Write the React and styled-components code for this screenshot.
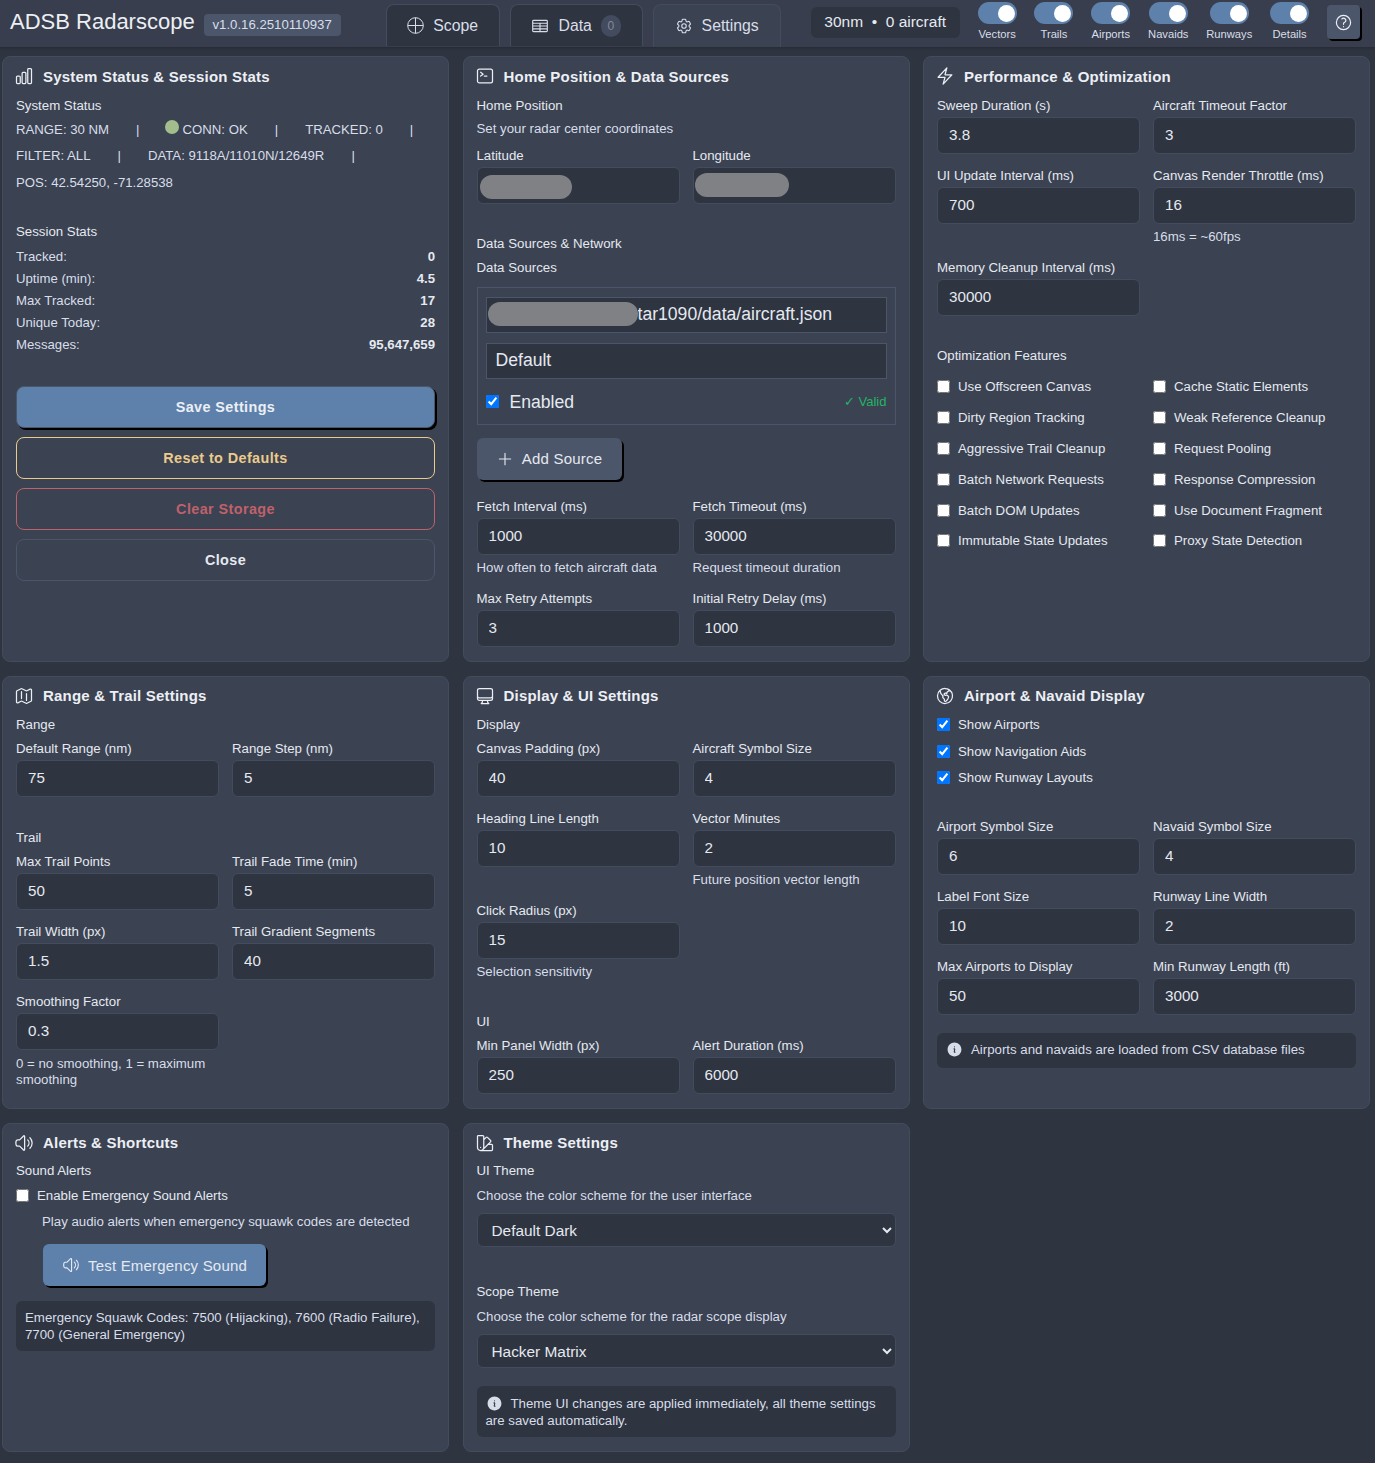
import React from 'react'
import styled, { createGlobalStyle } from 'styled-components'
import {
  HiOutlineChartBar, HiOutlineCommandLine, HiOutlineBolt, HiOutlineMap, HiOutlineComputerDesktop,
  HiOutlineGlobeAmericas, HiOutlineSpeakerWave, HiOutlineSwatch, HiOutlinePlus,
  HiOutlineQuestionMarkCircle, HiOutlineCog6Tooth, HiOutlineTableCells, HiInformationCircle,
} from 'react-icons/hi2'

const GlobalStyle = createGlobalStyle`
  * { box-sizing: border-box; }
  html, body { margin: 0; background: #2e3440; }
  body { font-family: "Liberation Sans", Arial, sans-serif; color: #e5e9f0; }
`

const Page = styled.div`
  width: 1375px;
  height: 1463px;
  overflow: hidden;
`

const Header = styled.header`
  height: 47px;
  display: flex;
  align-items: flex-start;
  padding: 0 14px 0 10px;
  background: #383e4d;
  box-shadow: 0 1px 3px rgba(0, 0, 0, 0.2);
`

const Brand = styled.h1`
  margin: 9px 0 0;
  font-size: 22px;
  line-height: 26px;
  font-weight: 400;
  color: #eceff4;
`

const Version = styled.span`
  margin: 14px 0 0 9px;
  height: 22px;
  width: 137px;
  border-radius: 4px;
  background: #4c566a;
  color: #d8dee9;
  font-size: 13.2px;
  line-height: 22px;
  text-align: center;
`

const Tabs = styled.nav`
  margin: 4px 0 0 45px;
  display: flex;
  gap: 10px;
`

const Tab = styled.div`
  width: ${(p) => p.$w}px;
  height: ${(p) => (p.$active ? 43 : 42)}px;
  display: flex;
  align-items: center;
  justify-content: center;
  gap: 9px;
  font-size: 15.8px;
  color: #d8dee9;
  background: ${(p) => (p.$active ? '#3b4252' : '#2e3440')};
  border: 1px solid #434c5e;
  border-bottom: 0;
  border-radius: 8px 8px 0 0;
`

const TabCount = styled.span`
  width: 20px;
  height: 22px;
  border-radius: 10px;
  background: #434c5e;
  color: #81899a;
  font-size: 12px;
  line-height: 22px;
  text-align: center;
`

const StatPill = styled.div`
  margin: 7px 0 0 30px;
  width: 149px;
  height: 31px;
  border-radius: 6px;
  background: #2e3440;
  font-size: 15.5px;
  line-height: 30px;
  text-align: center;
  white-space: pre;
  color: #e5e9f0;
`

const Toggles = styled.div`
  margin: 2px 0 0 18px;
  display: flex;
  gap: 17.8px;
`

const ToggleItem = styled.div`
  display: flex;
  flex-direction: column;
  align-items: center;
  min-width: 39px;
`

const ToggleTrack = styled.span`
  display: flex;
  align-items: center;
  justify-content: flex-end;
  width: 39px;
  height: 22px;
  padding-right: 2px;
  border-radius: 11px;
  background: #5e81ac;
`

const ToggleKnob = styled.span`
  width: 17px;
  height: 17px;
  border-radius: 50%;
  background: #fff;
`

const ToggleLabel = styled.span`
  margin-top: 3px;
  font-size: 11.2px;
  line-height: 14px;
  color: #d8dee9;
`

const HelpButton = styled.button`
  margin: 5px 0 0 18px;
  width: 33px;
  height: 34px;
  padding: 0;
  display: flex;
  align-items: center;
  justify-content: center;
  border: 0;
  border-radius: 4px;
  background: #4c566a;
  color: #eceff4;
  box-shadow: 2px 2px 0 #000;
`

const Grid = styled.main`
  margin: 9px 5px 0 2px;
  display: grid;
  grid-template-columns: repeat(3, 447px);
  column-gap: 13.5px;
  row-gap: 13.5px;
`

const Panel = styled.section`
  padding: 9px 13px 14px 13px;
  background: #3b4252;
  border: 1px solid #434c5e;
  border-radius: 8px;
`

const PanelTitle = styled.h2`
  margin: 0 0 10.5px;
  display: flex;
  align-items: center;
  height: 20px;
  font-size: 15px;
  font-weight: 700;
  letter-spacing: 0.2px;
  color: #eceff4;

  svg {
    width: 20px;
    height: 20px;
    margin: 0 9px 0 -2px;
    flex: none;
  }
`

const SubHead = styled.div`
  margin-top: ${(p) => p.$mt || 0}px;
  font-size: 13.25px;
  line-height: 17px;
  color: #e5e9f0;
`

const Note = styled.div`
  margin-top: ${(p) => p.$mt || 0}px;
  margin-left: ${(p) => p.$ml || 0}px;
  font-size: 13.25px;
  line-height: 17px;
  color: #d8dee9;
`

const StatusLine = styled.div`
  margin-top: 7px;
  display: flex;
  flex-wrap: wrap;
  column-gap: 27px;
  row-gap: 9.5px;
  font-size: 13.2px;
  line-height: 17px;
  color: #d8dee9;
`

const StatusItem = styled.span`
  display: inline-flex;
  align-items: center;
`

const StatusDot = styled.span`
  width: 14px;
  height: 14px;
  margin: -4px 4px 0 -2px;
  border-radius: 50%;
  background: #a3be8c;
`

const StatRows = styled.div`
  margin-top: 8px;
  display: flex;
  flex-direction: column;
  gap: 5px;
`

const StatRow = styled.div`
  display: flex;
  justify-content: space-between;
  font-size: 13.2px;
  line-height: 17px;
  color: #d8dee9;

  b {
    color: #e5e9f0;
  }
`

const ActionStack = styled.div`
  margin-top: 33.5px;
  display: flex;
  flex-direction: column;
  gap: 9px;
`

const ActionButton = styled.button`
  height: 42px;
  border-radius: 8px;
  font-family: inherit;
  font-size: 14.4px;
  font-weight: 700;
  letter-spacing: 0.4px;
  color: ${(p) => p.$color};
  background: ${(p) => (p.$primary ? '#5e81ac' : 'transparent')};
  border: 1px solid ${(p) => p.$border};
  box-shadow: ${(p) => (p.$primary ? '2px 2px 0 #000' : 'none')};
`

const FieldGrid = styled.div`
  margin-top: ${(p) => p.$mt || 0}px;
  display: grid;
  grid-template-columns: 203px 203px;
  column-gap: 13px;
  row-gap: 13px;
  align-items: start;
`

const Field = styled.div`
  display: flex;
  flex-direction: column;
  min-width: 0;
`

const FieldLabel = styled.label`
  margin-bottom: 3px;
  font-size: 13.25px;
  line-height: 17px;
  color: #e5e9f0;
`

const InputWrap = styled.div`
  position: relative;
`

const Input = styled.input`
  display: block;
  width: 100%;
  height: 37px;
  padding: 0 11px 2px;
  border: 1px solid #434c5e;
  border-radius: 6px;
  background: #2e3440;
  color: #e5e9f0;
  font-family: inherit;
  font-size: 15.2px;
  outline: none;
`

const FieldHint = styled.div`
  margin: ${(p) => (p.$tight ? 6 : 4)}px 0 1px;
  font-size: 13.25px;
  line-height: ${(p) => (p.$tight ? 16.5 : 17)}px;
  color: #d8dee9;
`

const Redacted = styled.span`
  position: absolute;
  left: ${(p) => p.$left}px;
  top: ${(p) => p.$top}px;
  width: ${(p) => p.$w}px;
  height: 24px;
  border-radius: 12px;
  background: #808185;
`

const SourceBox = styled.div`
  margin-top: 10.5px;
  height: 138px;
  padding: 9px 8px;
  border: 1px solid #4c566a;
  display: flex;
  flex-direction: column;
  gap: 10px;
`

const SourceInput = styled.input`
  display: block;
  width: 100%;
  height: 36px;
  padding: 0 0 0 ${(p) => p.$pad || 9}px;
  border: 1px solid #4c566a;
  background: #2e3440;
  color: #e5e9f0;
  font-family: inherit;
  font-size: 17.6px;
  outline: none;
`

const SourceFoot = styled.div`
  display: flex;
  align-items: center;
  justify-content: space-between;
  margin-top: 1px;
`

const SourceEnabled = styled.label`
  display: flex;
  align-items: center;
  gap: 11px;
  font-size: 17.6px;
  line-height: 24px;
  color: #e5e9f0;
`

const Valid = styled.span`
  font-size: 13px;
  color: #22b566;
`

const RaisedButton = styled.button`
  margin-top: ${(p) => p.$mt}px;
  margin-left: ${(p) => p.$ml || 0}px;
  width: ${(p) => p.$w}px;
  height: 42px;
  display: flex;
  align-items: center;
  justify-content: center;
  gap: 8px;
  border: 0;
  border-radius: 6px;
  font-family: inherit;
  font-size: 15px;
  letter-spacing: 0.2px;
  color: #e5e9f0;
  background: ${(p) => p.$bg};
  box-shadow: 2px 2px 0 #000;
`

const Native = styled.input`
  margin: 0;
  width: 13px;
  height: 13px;
  flex: none;
`

const CheckGrid = styled.div`
  margin-top: 14px;
  display: grid;
  grid-template-columns: 203px 203px;
  column-gap: 13px;
  row-gap: 13.9px;
`

const CheckList = styled.div`
  margin-top: ${(p) => p.$mt || 0}px;
  display: flex;
  flex-direction: column;
  gap: ${(p) => p.$gap || 0}px;
`

const CheckItem = styled.label`
  display: flex;
  align-items: center;
  gap: 8px;
  font-size: 13.25px;
  line-height: 17px;
  color: #e5e9f0;
`

const InfoBox = styled.div`
  margin-top: ${(p) => p.$mt || 0}px;
  padding: ${(p) => p.$pad || '8px 9px 10px'};
  min-height: 35px;
  border-radius: 6px;
  background: #2e3440;
  font-size: 13.25px;
  line-height: 17px;
  color: #d8dee9;

  svg {
    width: 17px;
    height: 17px;
    margin: 0 8px 0 0;
    vertical-align: -4px;
  }
`

const ThemeSelect = styled.select`
  display: block;
  margin-top: ${(p) => p.$mt}px;
  width: 100%;
  height: 34px;
  padding: 0 10px;
  border: 1px solid #434c5e;
  border-radius: 6px;
  background: #2e3440;
  color: #e5e9f0;
  font-family: inherit;
  font-size: 15.4px;
  outline: none;
`

const ScopeIcon = () => (
  <svg width="17" height="17" viewBox="0 0 17 17" fill="none" stroke="currentColor" strokeWidth="1">
    <circle cx="8.5" cy="8.5" r="7.8" />
    <path d="M8.5 .7v15.6M.7 8.5h15.6" />
  </svg>
)

const toggles = ['Vectors', 'Trails', 'Airports', 'Navaids', 'Runways', 'Details']
const stats = [
  ['Tracked:', '0'],
  ['Uptime (min):', '4.5'],
  ['Max Tracked:', '17'],
  ['Unique Today:', '28'],
  ['Messages:', '95,647,659'],
]
const optimizations = [
  'Use Offscreen Canvas', 'Cache Static Elements',
  'Dirty Region Tracking', 'Weak Reference Cleanup',
  'Aggressive Trail Cleanup', 'Request Pooling',
  'Batch Network Requests', 'Response Compression',
  'Batch DOM Updates', 'Use Document Fragment',
  'Immutable State Updates', 'Proxy State Detection',
]

const NumberField = ({ label, value, hint, blur }) => (
  <Field>
    <FieldLabel>{label}</FieldLabel>
    <InputWrap>
      <Input defaultValue={value} />
      {blur && <Redacted $left={blur[0]} $top={blur[1]} $w={blur[2]} />}
    </InputWrap>
    {hint && <FieldHint $tight={hint.length > 35}>{hint}</FieldHint>}
  </Field>
)

const App = () => (
  <Page>
    <GlobalStyle />

    <Header>
      <Brand>ADSB Radarscope</Brand>
      <Version>v1.0.16.2510110937</Version>
      <Tabs>
        <Tab $w={114}><ScopeIcon />Scope</Tab>
        <Tab $w={133}><HiOutlineTableCells size={18} />Data<TabCount>0</TabCount></Tab>
        <Tab $w={128} $active><HiOutlineCog6Tooth size={18} />Settings</Tab>
      </Tabs>
      <StatPill>{'30nm  •  0 aircraft'}</StatPill>
      <Toggles>
        {toggles.map((name) => (
          <ToggleItem key={name}>
            <ToggleTrack><ToggleKnob /></ToggleTrack>
            <ToggleLabel>{name}</ToggleLabel>
          </ToggleItem>
        ))}
      </Toggles>
      <HelpButton><HiOutlineQuestionMarkCircle size={19} /></HelpButton>
    </Header>

    <Grid>
      <Panel>
        <PanelTitle><HiOutlineChartBar />System Status &amp; Session Stats</PanelTitle>
        <SubHead>System Status</SubHead>
        <StatusLine>
          <StatusItem>RANGE: 30 NM</StatusItem>
          <StatusItem>|</StatusItem>
          <StatusItem><StatusDot />CONN: OK</StatusItem>
          <StatusItem>|</StatusItem>
          <StatusItem>TRACKED: 0</StatusItem>
          <StatusItem>|</StatusItem>
          <StatusItem>FILTER: ALL</StatusItem>
          <StatusItem>|</StatusItem>
          <StatusItem>DATA: 9118A/11010N/12649R</StatusItem>
          <StatusItem>|</StatusItem>
          <StatusItem>POS: 42.54250, -71.28538</StatusItem>
        </StatusLine>
        <SubHead $mt={32}>Session Stats</SubHead>
        <StatRows>
          {stats.map(([k, v]) => (
            <StatRow key={k}><span>{k}</span><b>{v}</b></StatRow>
          ))}
        </StatRows>
        <ActionStack>
          <ActionButton $primary $color="#eceff4" $border="#4c566a">Save Settings</ActionButton>
          <ActionButton $color="#ebcb8b" $border="#ebcb8b">Reset to Defaults</ActionButton>
          <ActionButton $color="#bf616a" $border="#bf616a">Clear Storage</ActionButton>
          <ActionButton $color="#e5e9f0" $border="#4c566a">Close</ActionButton>
        </ActionStack>
      </Panel>

      <Panel>
        <PanelTitle><HiOutlineCommandLine />Home Position &amp; Data Sources</PanelTitle>
        <SubHead>Home Position</SubHead>
        <Note $mt={6.5}>Set your radar center coordinates</Note>
        <FieldGrid $mt={9.5}>
          <NumberField label="Latitude" value="" blur={[3, 8, 92]} />
          <NumberField label="Longitude" value="" blur={[2, 6, 94]} />
        </FieldGrid>
        <SubHead $mt={31.5}>Data Sources &amp; Network</SubHead>
        <SubHead $mt={7}>Data Sources</SubHead>
        <SourceBox>
          <InputWrap>
            <SourceInput $pad={151} defaultValue="tar1090/data/aircraft.json" />
            <Redacted $left={2} $top={5} $w={150} />
          </InputWrap>
          <SourceInput defaultValue="Default" />
          <SourceFoot>
            <SourceEnabled><Native type="checkbox" defaultChecked />Enabled</SourceEnabled>
            <Valid>✓ Valid</Valid>
          </SourceFoot>
        </SourceBox>
        <RaisedButton $mt={13} $w={145} $bg="#4c566a"><HiOutlinePlus size={18} />Add Source</RaisedButton>
        <FieldGrid $mt={18.5}>
          <NumberField label="Fetch Interval (ms)" value="1000" hint="How often to fetch aircraft data" />
          <NumberField label="Fetch Timeout (ms)" value="30000" hint="Request timeout duration" />
          <NumberField label="Max Retry Attempts" value="3" />
          <NumberField label="Initial Retry Delay (ms)" value="1000" />
        </FieldGrid>
      </Panel>

      <Panel>
        <PanelTitle><HiOutlineBolt />Performance &amp; Optimization</PanelTitle>
        <FieldGrid>
          <NumberField label="Sweep Duration (s)" value="3.8" />
          <NumberField label="Aircraft Timeout Factor" value="3" />
          <NumberField label="UI Update Interval (ms)" value="700" />
          <NumberField label="Canvas Render Throttle (ms)" value="16" hint="16ms = ~60fps" />
          <NumberField label="Memory Cleanup Interval (ms)" value="30000" />
        </FieldGrid>
        <SubHead $mt={31.5}>Optimization Features</SubHead>
        <CheckGrid>
          {optimizations.map((name) => (
            <CheckItem key={name}><Native type="checkbox" />{name}</CheckItem>
          ))}
        </CheckGrid>
      </Panel>

      <Panel>
        <PanelTitle><HiOutlineMap />Range &amp; Trail Settings</PanelTitle>
        <SubHead>Range</SubHead>
        <FieldGrid $mt={7}>
          <NumberField label="Default Range (nm)" value="75" />
          <NumberField label="Range Step (nm)" value="5" />
        </FieldGrid>
        <SubHead $mt={31.5}>Trail</SubHead>
        <FieldGrid $mt={7}>
          <NumberField label="Max Trail Points" value="50" />
          <NumberField label="Trail Fade Time (min)" value="5" />
          <NumberField label="Trail Width (px)" value="1.5" />
          <NumberField label="Trail Gradient Segments" value="40" />
          <NumberField label="Smoothing Factor" value="0.3" hint="0 = no smoothing, 1 = maximum smoothing" />
        </FieldGrid>
      </Panel>

      <Panel>
        <PanelTitle><HiOutlineComputerDesktop />Display &amp; UI Settings</PanelTitle>
        <SubHead>Display</SubHead>
        <FieldGrid $mt={7}>
          <NumberField label="Canvas Padding (px)" value="40" />
          <NumberField label="Aircraft Symbol Size" value="4" />
          <NumberField label="Heading Line Length" value="10" />
          <NumberField label="Vector Minutes" value="2" hint="Future position vector length" />
          <NumberField label="Click Radius (px)" value="15" hint="Selection sensitivity" />
        </FieldGrid>
        <SubHead $mt={32}>UI</SubHead>
        <FieldGrid $mt={7}>
          <NumberField label="Min Panel Width (px)" value="250" />
          <NumberField label="Alert Duration (ms)" value="6000" />
        </FieldGrid>
      </Panel>

      <Panel>
        <PanelTitle><HiOutlineGlobeAmericas />Airport &amp; Navaid Display</PanelTitle>
        <CheckList $gap={9.5}>
          <CheckItem><Native type="checkbox" defaultChecked />Show Airports</CheckItem>
          <CheckItem><Native type="checkbox" defaultChecked />Show Navigation Aids</CheckItem>
          <CheckItem><Native type="checkbox" defaultChecked />Show Runway Layouts</CheckItem>
        </CheckList>
        <FieldGrid $mt={32}>
          <NumberField label="Airport Symbol Size" value="6" />
          <NumberField label="Navaid Symbol Size" value="4" />
          <NumberField label="Label Font Size" value="10" />
          <NumberField label="Runway Line Width" value="2" />
          <NumberField label="Max Airports to Display" value="50" />
          <NumberField label="Min Runway Length (ft)" value="3000" />
        </FieldGrid>
        <InfoBox $mt={18}><HiInformationCircle />Airports and navaids are loaded from CSV database files</InfoBox>
      </Panel>

      <Panel>
        <PanelTitle><HiOutlineSpeakerWave />Alerts &amp; Shortcuts</PanelTitle>
        <SubHead $mt={-1}>Sound Alerts</SubHead>
        <CheckList $mt={8}>
          <CheckItem><Native type="checkbox" />Enable Emergency Sound Alerts</CheckItem>
        </CheckList>
        <Note $mt={9} $ml={26}>Play audio alerts when emergency squawk codes are detected</Note>
        <RaisedButton $mt={14} $ml={27} $w={223} $bg="#5e81ac"><HiOutlineSpeakerWave size={18} />Test Emergency Sound</RaisedButton>
        <InfoBox $mt={15} $pad="7.5px 9px 8.5px">
          Emergency Squawk Codes: 7500 (Hijacking), 7600 (Radio Failure), 7700 (General Emergency)
        </InfoBox>
      </Panel>

      <Panel>
        <PanelTitle><HiOutlineSwatch />Theme Settings</PanelTitle>
        <SubHead $mt={-1}>UI Theme</SubHead>
        <Note $mt={8}>Choose the color scheme for the user interface</Note>
        <ThemeSelect $mt={9}><option>Default Dark</option></ThemeSelect>
        <SubHead $mt={36}>Scope Theme</SubHead>
        <Note $mt={8}>Choose the color scheme for the radar scope display</Note>
        <ThemeSelect $mt={9}><option>Hacker Matrix</option></ThemeSelect>
        <InfoBox $mt={18} $pad="8.5px 9px"><HiInformationCircle />Theme UI changes are applied immediately, all theme settings are saved automatically.</InfoBox>
      </Panel>
    </Grid>
  </Page>
)

export default App
